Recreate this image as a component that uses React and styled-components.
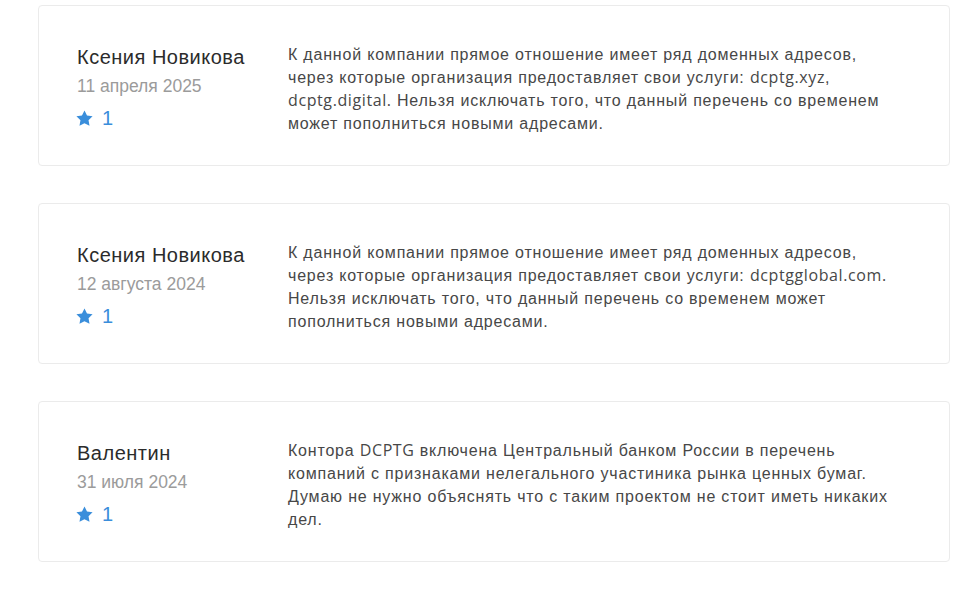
import React from "react";
import styled, { createGlobalStyle } from "styled-components";

const Global = createGlobalStyle`
  html, body { margin: 0; padding: 0; background: #fff; }
  body { font-family: "Liberation Sans", Arial, sans-serif; }
`;

const List = styled.div`
  display: flex;
  flex-direction: column;
  gap: 37px;
  padding: 5px 12px 0 38px;
`;

const Card = styled.article`
  display: grid;
  grid-template-columns: 211px 608px;
  align-items: start;
  box-sizing: border-box;
  width: 912px;
  min-height: 161px;
  padding: 37px 0 0 38px;
  border: 1px solid #ebebeb;
  border-radius: 4px;
  background: #fff;
`;

const Author = styled.div`
  display: flex;
  flex-direction: column;
  padding-top: 2px;
`;

const Name = styled.div`
  font-size: 20px;
  line-height: 24px;
  letter-spacing: 0.5px;
  color: #2b2b2b;
`;

const DateText = styled.div`
  font-size: 17.5px;
  line-height: 24px;
  margin-top: 5px;
  color: #9b9b9b;
`;

const Rating = styled.div`
  display: flex;
  align-items: center;
  gap: 9px;
  margin-top: 8px;
  margin-left: -1px;
  font-size: 20px;
  line-height: 24px;
  color: #3a8edb;
`;

const Body = styled.p`
  margin: 0;
  font-size: 16px;
  line-height: 23px;
  letter-spacing: 0.8px;
  color: #474747;
`;

const Latin = styled.span`
  font-family: "Open Sans", "Liberation Sans", sans-serif;
  letter-spacing: 0.6px;
`;

const Star = () => (
  <svg width="17" height="16" viewBox="0 0 24 23" aria-hidden="true">
    <path
      fill="#3a8edb"
      d="M12 0.6l3.6 7.3 8 1.2-5.8 5.6 1.4 8-7.2-3.8-7.2 3.8 1.4-8L.4 9.1l8-1.2z"
    />
  </svg>
);

const reviews = [
  {
    name: "Ксения Новикова",
    date: "11 апреля 2025",
    rating: 1,
    text: (
      <>
        К данной компании прямое отношение имеет ряд доменных адресов, через
        которые организация предоставляет свои услуги: <Latin>dcptg.xyz</Latin>,{" "}
        <Latin>dcptg.digital.</Latin> Нельзя исключать того, что данный перечень
        со временем может пополниться новыми адресами.
      </>
    ),
  },
  {
    name: "Ксения Новикова",
    date: "12 августа 2024",
    rating: 1,
    text: (
      <>
        К данной компании прямое отношение имеет ряд доменных адресов, через
        которые организация предоставляет свои услуги:{" "}
        <Latin>dcptgglobal.com.</Latin> Нельзя исключать того, что данный
        перечень со временем может пополниться новыми адресами.
      </>
    ),
  },
  {
    name: "Валентин",
    date: "31 июля 2024",
    rating: 1,
    text: (
      <>
        Контора <Latin>DCPTG</Latin> включена Центральный банком России в
        перечень компаний с признаками нелегального участиника рынка ценных
        бумаг. Думаю не нужно объяснять что с таким проектом не стоит иметь
        никаких дел.
      </>
    ),
  },
];

export default function App() {
  return (
    <>
      <Global />
      <List>
        {reviews.map((r, i) => (
          <Card key={i}>
            <Author>
              <Name>{r.name}</Name>
              <DateText>{r.date}</DateText>
              <Rating>
                <Star />
                <span>{r.rating}</span>
              </Rating>
            </Author>
            <Body>{r.text}</Body>
          </Card>
        ))}
      </List>
    </>
  );
}
